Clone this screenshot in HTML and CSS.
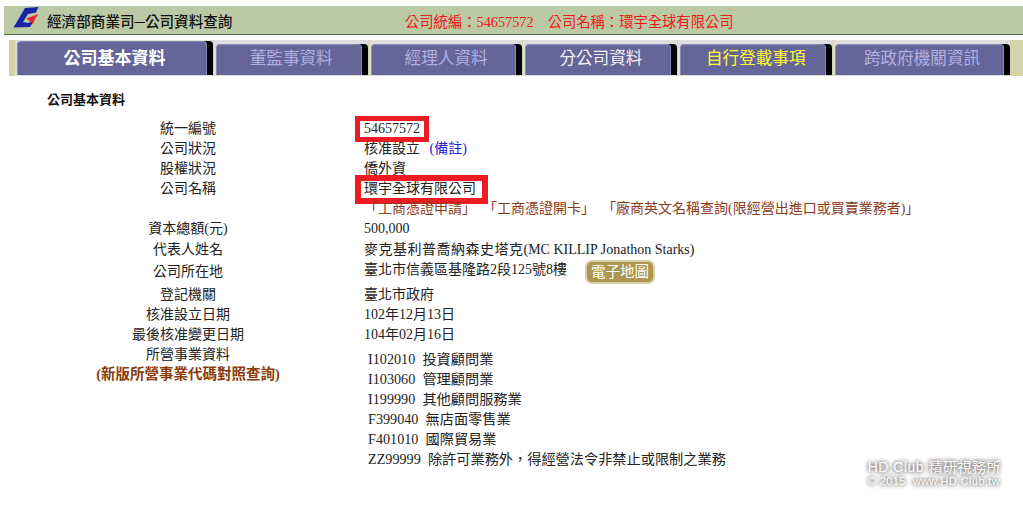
FILE: index.html
```html
<!DOCTYPE html>
<html lang="zh-Hant">
<head>
    <meta charset="UTF-8">
    <title>經濟部商業司-公司資料查詢</title>
    <link rel="stylesheet" href="styles.css">
</head>
<body>
    <div class="top-bar">
        <svg class="logo" width="28" height="28" viewBox="0 0 28 28">
            <path d="M0.5 21.5 L12 2 L25.5 1 L23 6.5 L15 8 L10 16 L15 17 L21 14.5 L17 21 Z" fill="#1a22a8"/>
            <path d="M25.5 8 L13.5 12.5 L20 18 L22 13 Z" fill="#e8222e"/>
        </svg>
        <span class="top-title">經濟部商業司─公司資料查詢</span>
        <span class="top-info">公司統編：54657572</span>
        <span class="top-info top-name">公司名稱：環宇全球有限公司</span>
    </div>

    <div class="tab-container">
        <div class="tab current-tab"><p class="tab-face">公司基本資料</p></div>
        <div class="tab"><p class="tab-face">董監事資料</p></div>
        <div class="tab"><p class="tab-face">經理人資料</p></div>
        <div class="tab"><p class="tab-face tab-white">分公司資料</p></div>
        <div class="tab"><p class="tab-face tab-yellow">自行登載事項</p></div>
        <div class="tab tab-wide"><p class="tab-face">跨政府機關資訊</p></div>
    </div>

    <h4 class="section-title">公司基本資料</h4>

    <div class="info-table">
        <div class="label row-20">統一編號</div>
        <div class="value row-20"><span class="mark mark-num">54657572</span></div>
        <div class="label row-20">公司狀況</div>
        <div class="value row-20">核准設立 <a class="note-link">(備註)</a></div>
        <div class="label row-20">股權狀況</div>
        <div class="value row-20">僑外資</div>
        <div class="label row-20">公司名稱</div>
        <div class="value row-20"><span class="mark mark-name">環宇全球有限公司</span></div>
        <div class="label row-20"></div>
        <div class="value row-20 links"><span class="link-item">「<a>工商憑證申請</a>」</span><span class="link-item">「<a>工商憑證開卡</a>」</span><span class="link-item">「<a>廠商英文名稱查詢(限經營出進口或買賣業務者)</a>」</span></div>
        <div class="label row-20">資本總額(元)</div>
        <div class="value row-20">500,000</div>
        <div class="label row-20">代表人姓名</div>
        <div class="value row-20"><span class="rep-name">麥克基利普喬納森史塔克</span>(MC KILLIP Jonathon Starks)</div>
        <div class="label row-addr"><span class="addr-label">公司所在地</span></div>
        <div class="value row-addr">臺北市信義區基隆路2段125號8樓<a class="map-btn">電子地圖</a></div>
        <div class="label row-20">登記機關</div>
        <div class="value row-20">臺北市政府</div>
        <div class="label row-20">核准設立日期</div>
        <div class="value row-20">102年12月13日</div>
        <div class="label row-20">最後核准變更日期</div>
        <div class="value row-20">104年02月16日</div>
        <div class="label business-label">
            <p>所營事業資料</p>
            <a class="code-link">(新版所營事業代碼對照查詢)</a>
        </div>
        <ul class="business-list">
            <li>I102010&nbsp; 投資顧問業</li>
            <li>I103060&nbsp; 管理顧問業</li>
            <li>I199990&nbsp; 其他顧問服務業</li>
            <li>F399040&nbsp; 無店面零售業</li>
            <li>F401010&nbsp; 國際貿易業</li>
            <li>ZZ99999&nbsp; 除許可業務外，得經營法令非禁止或限制之業務</li>
        </ul>
    </div>

    <div class="watermark">
        <p class="wm-big">HD.Club 精研視務所</p>
        <p class="wm-small">© 2015&nbsp; www.HD.Club.tw</p>
    </div>
</body>
</html>
```

FILE: styles.css
```css
body {
    margin: 0;
    background: #fff;
    color: #222;
    font-family: "Liberation Serif", "Noto Sans CJK TC", serif;
    font-size: 14px;
    min-height: 505px;
    position: relative;
    overflow: hidden;
}
p {
    margin: 0;
}
.top-bar {
    display: flex;
    align-items: center;
    height: 28px;
    margin: 6px 0 0 4px;
    background: #bcc9a5;
    border-bottom: 1px solid #55693a;
    font-size: 14.3px;
}
.logo {
    margin-left: 9px;
    flex: none;
}
.top-title {
    margin-left: 6px;
    width: 358px;
    color: #111;
    font-weight: 500;
    font-size: 14.6px;
}
.top-info {
    color: #f01818;
}
.top-name {
    margin-left: 14px;
}
.tab-container {
    display: flex;
    height: 36px;
    margin: 5px 0 0 9px;
    padding: 0 13px 0 6px;
    background: #d3d4aa;
}
.tab {
    width: 154px;
    margin-right: 1px;
    padding-top: 4px;
    background: #dddddd;
    border-bottom: 1px solid #dddddd;
    box-sizing: border-box;
}
.current-tab {
    width: 198px;
    padding-top: 1px;
}
.tab-wide {
    width: 177px;
    margin-right: 0;
}
.tab-face {
    height: 100%;
    margin-left: 2px;
    margin-right: 6px;
    box-sizing: border-box;
    padding: 0 0 0 5px;
    background: #66659a;
    border: 1px solid #8b8ab4;
    border-bottom: none;
    border-radius: 4px 4px 0 0;
    box-shadow: 6px 0 0 #000;
    color: #aeb0e0;
    font-size: 16.6px;
    text-align: center;
}
.current-tab .tab-face {
    padding-top: 2px;
    color: #fff;
    font-weight: 700;
    font-size: 17px;
}
.tab-white {
    color: #f2f2f2;
}
.tab-yellow {
    color: #ffff33;
}
.section-title {
    margin: 14px 0 0 47px;
    font-size: 13px;
    font-weight: 700;
    color: #111;
    line-height: 20px;
}
.info-table {
    display: grid;
    grid-template-columns: 364px 1fr;
    margin-top: 9px;
    line-height: 20px;
}
.label {
    width: 376px;
    text-align: center;
}
.value {
    white-space: nowrap;
}
.row-20 {
    height: 20.1px;
}
.row-addr {
    height: 25px;
}
.addr-label {
    display: block;
    padding-top: 2px;
}
.mark {
    display: inline-block;
    outline: 5px solid #ed1c24;
    line-height: 16px;
}
.mark-num {
    height: 16px;
    margin-left: -4px;
    padding: 0 4px;
}
.mark-name {
    height: 17px;
    margin-left: -3px;
    padding: 0 6px 0 3px;
    outline-width: 6px;
}
.rep-name {
    letter-spacing: 0.5px;
}
.note-link {
    margin-left: 6px;
    color: #2222dd;
}
.links {
    color: #8b3a1a;
}
.links a {
    color: #8b3a1a;
}
.link-item {
    margin-right: 14px;
}
.map-btn {
    display: inline-block;
    margin-left: 18px;
    padding: 0 4px;
    background: #ad9750;
    border: 2px solid #d9cfa8;
    border-radius: 7px;
    color: #fff;
    font-size: 14.5px;
    line-height: 20px;
    vertical-align: -3px;
}
.business-label p {
    line-height: 20px;
}
.code-link {
    color: #8b3a0a;
    font-weight: 700;
    font-size: 14.5px;
    line-height: 18px;
}
.business-list {
    list-style: none;
    margin: 4px 0 0 4px;
    padding: 0;
    font-size: 14.2px;
    line-height: 20px;
}
.watermark {
    position: absolute;
    right: 22px;
    top: 460px;
    color: #fff;
    text-shadow: 0 0 4px #666, 0 0 4px #666;
    font-family: "Liberation Sans", "Noto Sans CJK TC", sans-serif;
    white-space: nowrap;
}
.wm-big {
    font-size: 14px;
    line-height: 15px;
    letter-spacing: 0.5px;
}
.wm-small {
    font-size: 11px;
    line-height: 12px;
    letter-spacing: 0.4px;
}
```
